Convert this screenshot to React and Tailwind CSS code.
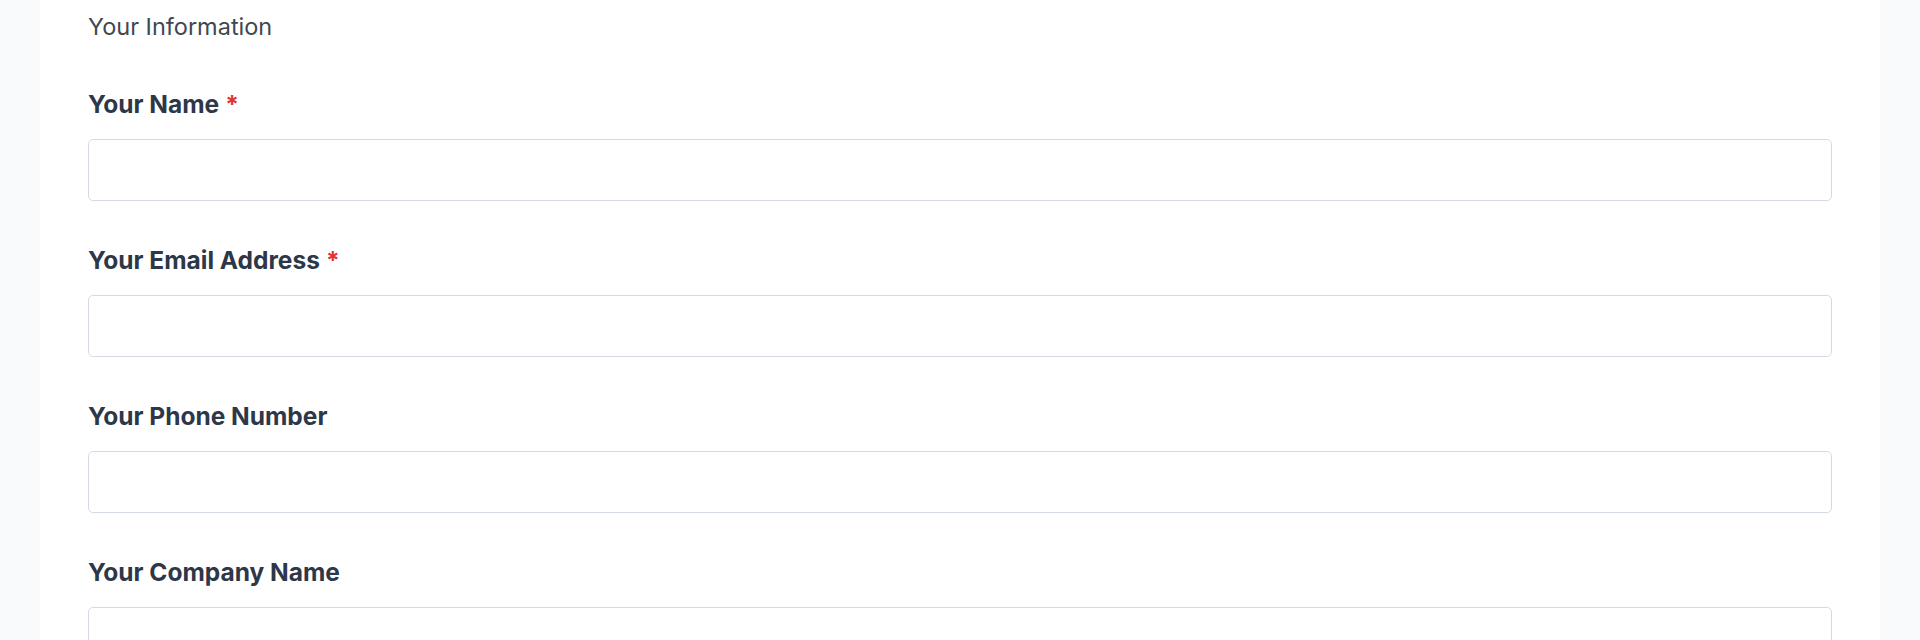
export default function App() {
  const fields = [
    { label: "Your Name", required: true },
    { label: "Your Email Address", required: true },
    { label: "Your Phone Number", required: false },
    { label: "Your Company Name", required: false },
  ];
  return (
    <div className="w-full h-[640px] overflow-hidden bg-[#f8fafc] px-[40px]" style={{ fontFamily: "Inter, 'Noto Sans', sans-serif" }}>
      <div className="bg-white h-full px-[48px] pt-[11px]">
        <h2 className="text-[23.5px] leading-[32px] font-normal text-[#3d4852] mb-[45px]">Your Information</h2>
        {fields.map((f) => (
          <div key={f.label} className="mb-[43px]">
            <label className="block text-[24.5px] leading-[32px] font-bold text-[#2d3748] mb-[19px]">
              {f.label}
              {f.required && <span className="text-[#e3342f] ml-[6px]">*</span>}
            </label>
            <input type="text" className="block w-full h-[62px] rounded-[5px] border-[1.5px] border-[#d5dbe6] bg-white" />
          </div>
        ))}
      </div>
    </div>
  );
}
